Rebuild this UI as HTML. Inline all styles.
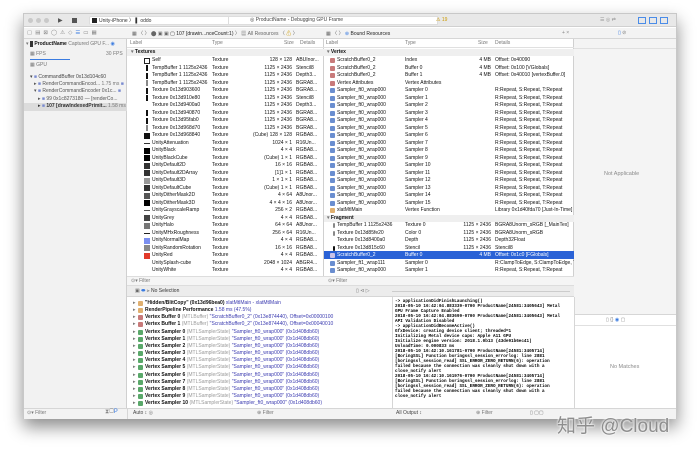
<!DOCTYPE html>
<html><head><meta charset="utf-8">
<style>
*{margin:0;padding:0;box-sizing:border-box}
body{width:700px;height:452px;background:#fff;position:relative;overflow:hidden;font-family:"Liberation Sans",sans-serif;font-size:5px;color:#222}
.a{position:absolute;white-space:nowrap}
.win{position:absolute;left:23px;top:13px;width:654px;height:406px;background:#fff;border:1px solid #c8c8c8;box-shadow:0 8px 16px rgba(0,0,0,.45)}
.t{position:absolute;white-space:nowrap;line-height:7px;font-size:5px;color:#111}
.gray{color:#777}
.ic{position:absolute;width:5px;height:5px;border-radius:1px}
.mono{font-family:"Liberation Mono",monospace;font-size:4.3px;font-weight:bold;line-height:5px;color:#000}
</style></head><body>
<div class="win"></div>
<div class="a" style="left:24px;top:14px;width:652px;height:13px;background:#e8e8e8;border-bottom:1px solid #d0d0d0"></div>
<div class="a" style="left:28px;top:18px;width:5px;height:5px;border-radius:50%;background:#c9c9c9"></div>
<div class="a" style="left:36px;top:18px;width:5px;height:5px;border-radius:50%;background:#c9c9c9"></div>
<div class="a" style="left:44px;top:18px;width:5px;height:5px;border-radius:50%;background:#c9c9c9"></div>
<div class="a" style="left:58px;top:17px;font-size:6px;color:#555">▶</div>
<div class="a" style="left:72px;top:18px;width:5px;height:5px;background:#555"></div>
<div class="a" style="left:89px;top:16px;width:250px;height:9px;background:#fff;border-radius:2px;border:1px solid #ddd"></div>
<div class="a" style="left:92px;top:18px;width:5px;height:5px;background:#222"></div>
<div class="a" style="left:99px;top:17px;font-size:5px;color:#333">Unity-iPhone 〉 ▌ oddo</div>
<div class="a" style="left:228px;top:16px;width:210px;height:9px;background:#fff;border:1px solid #ddd"></div>
<div class="a" style="left:250px;top:17px;font-size:5px;color:#444">◎ ProductName - Debugging GPU Frame</div>
<div class="a" style="left:436px;top:17px;font-size:5px;color:#c90">⚠ 19</div>
<div class="a" style="left:600px;top:17px;font-size:5px;color:#999">☰ ◎ ⇄</div>
<div class="a" style="left:638px;top:17px;width:8px;height:7px;border:1px solid #4a8ce8"></div>
<div class="a" style="left:649px;top:17px;width:8px;height:7px;border:1px solid #4a8ce8"></div>
<div class="a" style="left:660px;top:17px;width:8px;height:7px;border:1px solid #4a8ce8"></div>
<div class="a" style="left:24px;top:28px;width:652px;height:11px;background:#f3f3f3;border-bottom:1px solid #d6d6d6"></div>
<div class="a" style="left:27px;top:30px;font-size:5.5px;color:#888;letter-spacing:3px">▢▤⊠◯⚠◇<span style="color:#3a7be0">☰</span>▭▦</div>
<div class="a" style="left:132px;top:30px;font-size:5px;color:#666">▦ 〈 〉 ⬤ ▣ ▣ <span style="color:#222">▢ 107 [drawin...nceCount:1)</span> 〉 ▦ All Resources 〈 <span style="color:#c90">⚠</span> 〉</div>
<div class="a" style="left:326px;top:30px;font-size:5px;color:#666">▦ 〈 〉 <span style="color:#3a7be0">⊛</span> <span style="color:#222">Bound Resources</span></div>
<div class="a" style="left:562px;top:30px;font-size:5px;color:#888">+ ×</div>
<div class="a" style="left:618px;top:30px;font-size:5px;color:#3a7be0">▯ <span style="color:#888">⊘</span></div>
<div class="a" style="left:24px;top:39px;width:103px;height:370px;background:#f2f2f2;border-right:1px solid #d0d0d0"></div>
<div class="t" style="left:26px;top:41px"><span class="gray">▾</span> <span style="background:#333;color:#333">■</span> <b>ProductName</b> <span class="gray">Captured GPU F...</span> <span style="color:#3a7be0">◉</span></div>
<div class="t gray" style="left:30px;top:51px">▦ FPS<span style="position:absolute;left:76px">30 FPS</span></div>
<div class="a" style="left:30px;top:59px;width:40px;height:1px;background:#3a7be0"></div>
<div class="t gray" style="left:30px;top:62px">▦ GPU</div>
<div class="t" style="left:30px;top:74px;color:#444">▾ <span style="color:#7a8bd0">■</span> CommandBuffer 0x13d104c60</div>
<div class="t" style="left:34px;top:81px;color:#555">▸ <span style="color:#7a8bd0">■</span> RenderCommandEncod... <span class="gray">1.75 ms</span> <span style="color:#7a8bd0">■</span></div>
<div class="t" style="left:34px;top:88px;color:#555">▾ <span style="color:#7a8bd0">■</span> RenderCommandEncoder 0x1c... <span style="color:#7a8bd0">■</span></div>
<div class="t" style="left:38px;top:96px;color:#555">▸ <span style="color:#7a8bd0">■</span> 99 0x1c8273180 — [renderCo...</div>
<div class="a" style="left:24px;top:103px;width:103px;height:8px;background:#dcdcdc"></div>
<div class="t" style="left:38px;top:103px;color:#333">▸ <span style="color:#7a8bd0">■</span> <b>107 [drawIndexedPrimit...</b> <span class="gray">1.58 ms</span></div>
<div class="a" style="left:127px;top:39px;width:197px;height:237px;background:#fff;border-right:1px solid #d0d0d0"></div>
<div class="a" style="left:127px;top:39px;width:197px;height:9px;border-bottom:1px solid #e0e0e0"></div>
<div class="t gray" style="left:130px;top:40px">Label</div>
<div class="t gray" style="left:212px;top:40px">Type</div>
<div class="t gray" style="left:284px;top:40px">Size</div>
<div class="t gray" style="left:300px;top:40px">Details</div>
<div class="a" style="left:127px;top:49px;width:197px;height:7px;background:#efefef"></div>
<div class="t" style="left:131px;top:49px"><b><span class="gray">▾</span> Textures</b></div>
<div id="tex"></div>
<div class="a" style="left:324px;top:39px;width:250px;height:237px;background:#fff;border-right:1px solid #d0d0d0"></div>
<div class="a" style="left:324px;top:39px;width:250px;height:9px;border-bottom:1px solid #e0e0e0"></div>
<div class="t gray" style="left:326px;top:40px">Label</div>
<div class="t gray" style="left:405px;top:40px">Type</div>
<div class="t gray" style="left:478px;top:40px">Size</div>
<div class="t gray" style="left:495px;top:40px">Details</div>
<div class="a" style="left:324px;top:49px;width:250px;height:7px;background:#efefef"></div>
<div class="t" style="left:327px;top:49px"><b><span class="gray">▾</span> Vertex</b></div>
<div class="a" style="left:324px;top:215px;width:250px;height:7px;background:#efefef"></div>
<div class="t" style="left:327px;top:215px"><b><span class="gray">▾</span> Fragment</b></div>
<div class="a" style="left:324px;top:251px;width:250px;height:8px;background:#2a62d6"></div>
<div id="res"></div>
<div class="a" style="left:127px;top:276px;width:447px;height:10px;background:#f5f5f5;border-top:1px solid #ddd;border-bottom:1px solid #ddd"></div>
<div class="t gray" style="left:131px;top:278px">⊙▾ Filter</div>
<div class="t gray" style="left:328px;top:278px">⊙▾ Filter</div>
<div class="a" style="left:127px;top:286px;width:447px;height:11px;background:#ececec;border-bottom:1px solid #d6d6d6"></div>
<div class="t" style="left:135px;top:288px;color:#666">▣ <span style="color:#3a7be0">⬬</span> ⫸ <span style="color:#333">No Selection</span></div>
<div class="t gray" style="left:356px;top:288px">▯ ⊲ ▷</div>
<div class="a" style="left:392px;top:291px;width:178px;height:1px;background:#ccc"></div>
<div class="a" style="left:574px;top:39px;width:102px;height:275px;background:#f4f4f4"></div>
<div class="a" style="left:574px;top:48px;width:102px;height:1px;background:#e0e0e0"></div>
<div class="t" style="left:604px;top:171px;font-size:5.5px;color:#8a8a8a">Not Applicable</div>
<div class="a" style="left:574px;top:314px;width:102px;height:1px;background:#d6d6d6"></div>
<div class="t" style="left:606px;top:317px;color:#888">▯ {} <span style="color:#3a7be0">◉</span> ▢</div>
<div class="a" style="left:574px;top:325px;width:102px;height:1px;background:#e0e0e0"></div>
<div class="t" style="left:610px;top:364px;font-size:5.5px;color:#8a8a8a">No Matches</div>
<div id="vars"></div>
<div class="a" style="left:392px;top:297px;width:1px;height:112px;background:#d6d6d6"></div>
<div class="a" style="left:574px;top:297px;width:1px;height:112px;background:#d6d6d6"></div>
<div class="a mono" style="left:395px;top:299px">-&gt; applicationDidFinishLaunching()<br>2018-05-10 16:42:04.883339-0700 ProductName[24581:3405643] Metal<br>GPU Frame Capture Enabled<br>2018-05-10 16:42:04.883699-0700 ProductName[24581:3405643] Metal<br>API Validation Disabled<br>-&gt; applicationDidBecomeActive()<br>GfxDevice: creating device client; threaded=1<br>Initializing Metal device caps: Apple A11 GPU<br>Initialize engine version: 2018.1.0b13 (43de91b6ec41)<br>UnloadTime: 0.000833 ms<br>2018-05-10 16:42:10.161781-0700 ProductName[24581:3405714]<br>[BoringSSL] Function boringssl_session_errorlog: line 2881<br>[boringssl_session_read] SSL_ERROR_ZERO_RETURN(6): operation<br>failed because the connection was cleanly shut down with a<br>close_notify alert<br>2018-05-10 16:42:10.161976-0700 ProductName[24581:3405714]<br>[BoringSSL] Function boringssl_session_errorlog: line 2881<br>[boringssl_session_read] SSL_ERROR_ZERO_RETURN(6): operation<br>failed because the connection was cleanly shut down with a<br>close_notify alert</div>
<div class="a" style="left:24px;top:408px;width:652px;height:11px;background:#f3f3f3;border-top:1px solid #d6d6d6"></div>
<div class="t gray" style="left:27px;top:410px">⊙▾ Filter</div>
<div class="t" style="left:105px;top:409px;font-size:6px;color:#888">⧗▢<span style="color:#3a7be0">P</span></div>
<div class="a" style="left:127px;top:408px;width:1px;height:11px;background:#d6d6d6"></div>
<div class="t" style="left:133px;top:410px;color:#444">Auto ↕ <span class="gray">◎</span></div>
<div class="t gray" style="left:257px;top:410px">⊕ Filter</div>
<div class="t" style="left:396px;top:410px;color:#444">All Output ↕</div>
<div class="t gray" style="left:476px;top:410px">⊕ Filter</div>
<div class="t gray" style="left:530px;top:410px">▯ ▢▢</div>
<div class="a" style="left:557px;top:411px;font-size:19px;color:#8e8e8e;font-family:'Liberation Sans','Noto Sans CJK SC',sans-serif;text-shadow:0 0 2px #fff,0 0 2px #fff">知乎 @Cloud</div>
<script>
(function(){
var tex=[["Self","Texture","128 × 128","ABUInor..."],["TempBuffer 1 1125x2436","Texture","1125 × 2436","Stencil8"],["TempBuffer 1 1125x2436","Texture","1125 × 2436","Depth3..."],["TempBuffer 1 1125x2436","Texture","1125 × 2436","BGRA8..."],["Texture 0x13d903600","Texture","1125 × 2436","BGRA8..."],["Texture 0x13d910e80","Texture","1125 × 2436","Stencil8"],["Texture 0x13d9400a0","Texture","1125 × 2436","Depth3..."],["Texture 0x13d940870","Texture","1125 × 2436","BGRA8..."],["Texture 0x13d95fab0","Texture","1125 × 2436","BGRA8..."],["Texture 0x13d968d70","Texture","1125 × 2436","BGRA8..."],["Texture 0x13d968840","Texture","(Cube) 128 × 128","RGBA8..."],["UnityAttenuation","Texture","1024 × 1","R16Un..."],["UnityBlack","Texture","4 × 4","RGBA8..."],["UnityBlackCube","Texture","(Cube) 1 × 1","RGBA8..."],["UnityDefault2D","Texture","16 × 16","RGBA8..."],["UnityDefault2DArray","Texture","[1]1 × 1","RGBA8..."],["UnityDefault3D","Texture","1 × 1 × 1","RGBA8..."],["UnityDefaultCube","Texture","(Cube) 1 × 1","RGBA8..."],["UnityDitherMask2D","Texture","4 × 64","A8Unor..."],["UnityDitherMask3D","Texture","4 × 4 × 16","A8Unor..."],["UnityGrayscaleRamp","Texture","256 × 2","RGBA8..."],["UnityGrey","Texture","4 × 4","RGBA8..."],["UnityHalo","Texture","64 × 64","A8Unor..."],["UnityMHxRoughness","Texture","256 × 64","R16Un..."],["UnityNormalMap","Texture","4 × 4","RGBA8..."],["UnityRandomRotation","Texture","16 × 16","RGBA8..."],["UnityRed","Texture","4 × 4","RGBA8..."],["UnitySplash-cube","Texture","2048 × 1024","ABGR4..."],["UnityWhite","Texture","4 × 4","RGBA8..."]];
var th=["#fff;border:1px solid #222","#111","#111","#888","#111","#111","none","#111","#111","#888","#111","#333","#000","#000","#333","#333","#999","#333","#555","#000","#555","#444","#777","#222","#7b8ff0","#888","#e23a2a","none","none"];
var h="";
tex.forEach(function(r,i){var y=57+i*7.5;
var c=th[i];
if(c!="none"){var w=(i>=1&&i<=9)?2:6;var hh=(i==11||i==20||i==23)?1:6;var yy=(hh==1)?y+3:y+0.5;
h+='<div class="a" style="left:'+(i>=1&&i<=9?146:144)+'px;top:'+yy+'px;width:'+(hh==1?6:w)+'px;height:'+hh+'px;background:'+c+'"></div>';}
h+='<div class="t" style="left:152px;top:'+y+'px">'+r[0]+'</div><div class="t" style="left:212px;top:'+y+'px">'+r[1]+'</div><div class="t" style="left:250px;top:'+y+'px;width:42px;text-align:right">'+r[2]+'</div><div class="t" style="left:296px;top:'+y+'px">'+r[3]+'</div>';});
document.getElementById("tex").innerHTML=h;
var res=[["ScratchBuffer0_2","Index","4 MB","Offset: 0x40090","#c87a7a"],["ScratchBuffer0_2","Buffer 0","4 MB","Offset: 0x100 [VGlobals]","#c87a7a"],["ScratchBuffer0_2","Buffer 1","4 MB","Offset: 0x40010 [vertexBuffer.0]","#c87a7a"],["Vertex Attributes","Vertex Attributes","","","#c87a7a"]];
for(var k=0;k<16;k++)res.push(["Sampler_ft0_wrap000","Sampler "+k,"","R:Repeat, S:Repeat, T:Repeat","#6a8ed0"]);
res.push(["xlatMtlMain","Vertex Function","","Library 0x1d40fda70 [Just-In-Time]","#e0b070"]);
var h2="";
res.forEach(function(r,i){var y=57+i*7.5;
h2+='<div class="ic" style="left:330px;top:'+(y+1)+'px;background:'+r[4]+'"></div><div class="t" style="left:337px;top:'+y+'px">'+r[0]+'</div><div class="t" style="left:405px;top:'+y+'px">'+r[1]+'</div><div class="t" style="left:460px;top:'+y+'px;width:31px;text-align:right">'+r[2]+'</div><div class="t" style="left:495px;top:'+y+'px">'+r[3]+'</div>';});
var fr=[["TempBuffer 1 1125x2436","Texture 0","1125 × 2436","BGRA8Unorm_sRGB [_MainTex]","#888",""],["Texture 0x13d85fe20","Color 0","1125 × 2436","BGRA8Unorm_sRGB","#888",""],["Texture 0x13d8400a0","Depth","1125 × 2436","Depth32Float","none",""],["Texture 0x13d815c60","Stencil","1125 × 2436","Stencil8","#111",""],["ScratchBuffer0_2","Buffer 0","4 MB","Offset: 0x1c0 [FGlobals]","#c9c2e8","#fff"],["Sampler_ft1_wrap111","Sampler 0","","R:ClampToEdge, S:ClampToEdge, T:...","#6a8ed0",""],["Sampler_ft0_wrap000","Sampler 1","","R:Repeat, S:Repeat, T:Repeat","#6a8ed0",""]];
fr.forEach(function(r,i){var y=222+i*7.5;var col=r[5]?'color:#fff;':'';
if(r[4]!="none")h2+='<div class="ic" style="left:'+(i<4?333:330)+'px;top:'+(y+1)+'px;width:'+(i<4?2:5)+'px;background:'+r[4]+'"></div>';
h2+='<div class="t" style="'+col+'left:337px;top:'+y+'px">'+r[0]+'</div><div class="t" style="'+col+'left:405px;top:'+y+'px">'+r[1]+'</div><div class="t" style="'+col+'left:446px;top:'+y+'px;width:45px;text-align:right">'+r[2]+'</div><div class="t" style="'+col+'left:495px;top:'+y+'px">'+r[3]+'</div>';});
document.getElementById("res").innerHTML=h2;
var v=[['"Hidden/BlitCopy" (0x13d96bea0)','','xlatMtlMain - xlatMtlMain','#e0b070'],['RenderPipeline Performance','','1.58 ms (47.5%)','#e0b070'],['Vertex Buffer 0','(MTLBuffer)','"ScratchBuffer0_2" (0x13e874440), Offset=0x00000100','#c87a7a'],['Vertex Buffer 1','(MTLBuffer)','"ScratchBuffer0_2" (0x13e874440), Offset=0x00040010','#c87a7a']];
for(var s=0;s<=10;s++)v.push(['Vertex Sampler '+s,'(MTLSamplerState)','"Sampler_ft0_wrap000" (0x1d408db60)','#5aa86a']);
var h3="";
v.forEach(function(r,i){var y=300+i*7.15;
h3+='<div class="t gray" style="left:133px;top:'+y+'px">▸</div><div class="ic" style="left:138px;top:'+(y+1)+'px;background:'+r[3]+'"></div><div class="t" style="left:145px;top:'+y+'px"><b>'+r[0]+'</b> <span style="color:#999">'+r[1]+'</span> <span style="color:#3b3bb0">'+r[2]+'</span></div>';});
document.getElementById("vars").innerHTML=h3;
})();
</script>
</body></html>
